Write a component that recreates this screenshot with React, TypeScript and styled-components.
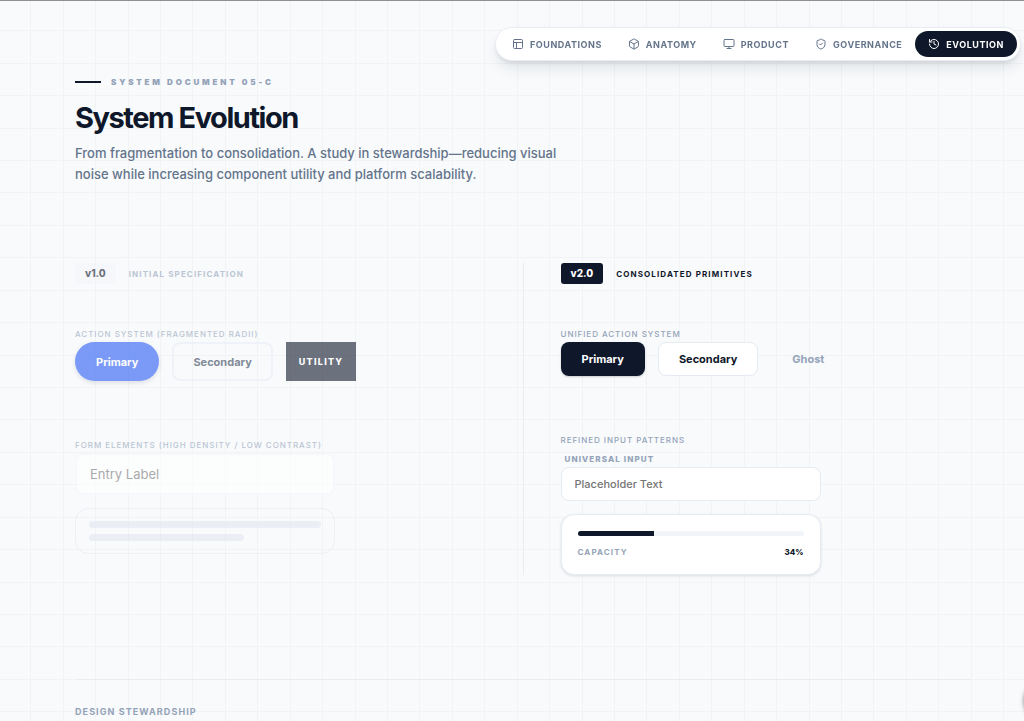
import React from "react";
import styled, { createGlobalStyle, css } from "styled-components";
import { Box, History, Monitor, PanelsTopLeft, ShieldCheck } from "lucide-react";

const ink = "#0f172a";
const slate = "#64748b";
const mist = "#94a3b8";

const GlobalStyle = createGlobalStyle`
  *, *::before, *::after { box-sizing: border-box; }
  body {
    margin: 0;
    background: #f8fafc;
    color: ${ink};
    font-family: Inter, "Liberation Sans", sans-serif;
    -webkit-font-smoothing: antialiased;
  }
  button, input { font-family: inherit; }
`;

const Page = styled.div`
  position: relative;
  min-height: 100vh;
  overflow: hidden;
  border-top: 1px solid #8e9095;
`;

const GridLines = styled.svg`
  position: absolute;
  inset: 0;
  z-index: -1;
  width: 100%;
  height: 100%;
`;

const Nav = styled.nav`
  position: fixed;
  top: 27px;
  right: 3px;
  z-index: 2;
  display: flex;
  align-items: center;
  padding: 3px;
  border: 1px solid #e9edf3;
  border-radius: 17px;
  background: #fff;
  box-shadow: 0 8px 16px -3px rgba(15, 23, 42, 0.12), 0 3px 5px -2px rgba(15, 23, 42, 0.12);
`;

const NavLink = styled.a<{ $active?: boolean }>`
  display: flex;
  align-items: center;
  gap: 6px;
  height: 26px;
  padding: 0 13px;
  border-radius: 13px;
  color: ${(p) => (p.$active ? "#fff" : slate)};
  background: ${(p) => (p.$active ? ink : "transparent")};
  font-size: 9px;
  font-weight: 700;
  letter-spacing: 0.06em;
  text-decoration: none;
  white-space: nowrap;
`;

const Main = styled.main`
  padding: 75px 54px 0 75px;
`;

const Eyebrow = styled.div`
  display: flex;
  align-items: center;
  gap: 10px;
  color: ${mist};
  font-size: 8px;
  font-weight: 900;
  line-height: 12px;
  letter-spacing: 0.35em;
`;

const Dash = styled.span`
  width: 26px;
  height: 2px;
  background: ${ink};
`;

const Title = styled.h1`
  margin: 12px 0 7px;
  font-size: 29px;
  font-weight: 700;
  line-height: 36px;
  letter-spacing: -0.05em;
`;

const Lead = styled.p`
  max-width: 484px;
  margin: 0;
  color: ${slate};
  font-size: 13px;
  font-weight: 500;
  line-height: 21px;
`;

const Comparison = styled.div`
  display: grid;
  grid-template-columns: 1fr 1fr;
  margin-top: 78px;
`;

const Version = styled.section<{ $current?: boolean }>`
  ${(p) =>
    p.$current
      ? css`
          padding-left: 37px;
          border-left: 1px solid #e9edf2;
        `
      : css`
          opacity: 0.6;
        `}
`;

const VersionHead = styled.header`
  display: flex;
  align-items: center;
  gap: 13px;
  margin-bottom: 44px;
`;

const Badge = styled.span<{ $current?: boolean }>`
  padding: 0 10px;
  border-radius: 3px;
  color: ${(p) => (p.$current ? "#fff" : ink)};
  background: ${(p) => (p.$current ? ink : "#f4f6fa")};
  font-size: 10px;
  font-weight: 800;
  line-height: 21px;
`;

const VersionName = styled.h2<{ $current?: boolean }>`
  margin: 0;
  color: ${(p) => (p.$current ? ink : mist)};
  font-size: 8px;
  font-weight: 700;
  line-height: 12px;
  letter-spacing: 0.14em;
`;

const Group = styled.div`
  & + & { margin-top: 58px; }
`;

const GroupLabel = styled.h3`
  margin: 0 0 2px;
  color: ${mist};
  font-size: 8px;
  font-weight: 500;
  line-height: 12px;
  letter-spacing: 0.12em;
`;

const Actions = styled.div`
  display: flex;
  gap: 13px;
`;

const Button = styled.button`
  height: 34px;
  padding: 0 20px;
  border: 1px solid transparent;
  border-radius: 8px;
  color: ${mist};
  background: transparent;
  font-size: 11px;
  font-weight: 700;
`;

const DarkButton = styled(Button)`
  color: #fff;
  background: ${ink};
  box-shadow: 0 1px 2px rgba(15, 23, 42, 0.2);
`;

const LightButton = styled(Button)`
  border-color: #e6ebf2;
  color: ${ink};
  background: #fff;
`;

const PillButton = styled(Button)`
  height: 39px;
  border-radius: 20px;
  color: #fff;
  background: #295cf5;
  box-shadow: 0 2px 4px rgba(15, 23, 42, 0.18);
`;

const OutlineButton = styled(Button)`
  height: 39px;
  padding: 0 19px;
  border: 2px solid #eaedf6;
  color: #334155;
`;

const SquareButton = styled(Button)`
  height: 39px;
  padding: 0 12px;
  border-radius: 0;
  color: #fff;
  background: ${ink};
  font-size: 9px;
  font-weight: 800;
  letter-spacing: 0.14em;
`;

const Fields = styled.div`
  display: flex;
  flex-direction: column;
  gap: 13px;
  max-width: 260px;
`;

const FieldLabel = styled.label`
  display: block;
  padding: 5px 4px 2px;
  color: ${mist};
  font-size: 8px;
  font-weight: 800;
  line-height: 12px;
  letter-spacing: 0.14em;
`;

const TextInput = styled.input`
  display: block;
  width: 100%;
  height: 34px;
  padding: 0 13px;
  border: 1px solid #e6ebf2;
  border-radius: 8px;
  background: #fff;
  font-size: 11px;
  font-weight: 500;
  &::placeholder { color: #757575; opacity: 1; }
`;

const LegacyInput = styled(TextInput)`
  height: 42px;
  border: 2px solid #f6f8fc;
  font-size: 13px;
  font-weight: 400;
`;

const SkeletonCard = styled.div`
  display: flex;
  flex-direction: column;
  gap: 6px;
  padding: 12px 13px;
  border: 1px solid #e6eaf0;
  border-radius: 13px;
`;

const SkeletonLine = styled.span<{ $short?: boolean }>`
  width: ${(p) => (p.$short ? "67%" : "100%")};
  height: 7px;
  border-radius: 4px;
  background: #e4e7f1;
`;

const CapacityCard = styled.div`
  display: flex;
  flex-direction: column;
  gap: 10px;
  padding: 16px;
  border: 1px solid #e6ebf2;
  border-radius: 13px;
  background: #fff;
  box-shadow: 0 1px 3px rgba(15, 23, 42, 0.12);
`;

const Track = styled.div`
  height: 5px;
  overflow: hidden;
  border-radius: 3px;
  background: #f1f4f9;
`;

const Fill = styled.div`
  height: 100%;
  background: ${ink};
`;

const CapacityRow = styled.div`
  display: flex;
  justify-content: space-between;
  color: ${mist};
  font-size: 8px;
  font-weight: 700;
  line-height: 12px;
`;

const CapacityName = styled.span`
  letter-spacing: 0.14em;
`;

const CapacityValue = styled.span`
  color: ${ink};
  font-weight: 800;
`;

const Footer = styled.footer`
  margin-top: 104px;
  padding: 26px 0 3px;
  border-top: 1px solid #e9ecf0;
`;

const FooterTitle = styled.h2`
  margin: 0;
  color: ${mist};
  font-size: 9px;
  font-weight: 700;
  line-height: 12px;
  letter-spacing: 0.12em;
`;

const FloatingDot = styled.div`
  position: fixed;
  right: -41px;
  bottom: 0;
  width: 40px;
  height: 40px;
  border-radius: 50%;
  background: ${ink};
  box-shadow: 0 0 5px rgba(0, 0, 0, 0.8);
`;

const links = [
  { label: "FOUNDATIONS", Icon: PanelsTopLeft },
  { label: "ANATOMY", Icon: Box },
  { label: "PRODUCT", Icon: Monitor },
  { label: "GOVERNANCE", Icon: ShieldCheck },
  { label: "EVOLUTION", Icon: History, active: true },
];

const gridStops = [30, 63, 95, 128, 160, 192, 225];
const capacity = 34;

export default function App() {
  return (
    <>
      <GlobalStyle />
      <Page>
        <GridLines aria-hidden="true">
          <defs>
            <pattern id="grid" width="227" height="227" patternUnits="userSpaceOnUse">
              {gridStops.map((s) => (
                <path key={s} d={`M${s + 0.5} 0V227M0 ${s - 0.5}H227`} stroke="#f1f3f5" strokeWidth="1" />
              ))}
            </pattern>
          </defs>
          <rect width="100%" height="100%" fill="url(#grid)" />
        </GridLines>

        <Nav aria-label="Sections">
          {links.map(({ label, Icon, active }) => (
            <NavLink key={label} href={`#${label.toLowerCase()}`} $active={active} aria-current={active ? "page" : undefined}>
              <Icon size={12} strokeWidth={2} aria-hidden="true" />
              {label}
            </NavLink>
          ))}
        </Nav>

        <Main>
          <Eyebrow>
            <Dash />
            SYSTEM DOCUMENT 05-C
          </Eyebrow>
          <Title>System Evolution</Title>
          <Lead>
            From fragmentation to consolidation. A study in stewardship—reducing visual noise while increasing
            component utility and platform scalability.
          </Lead>

          <Comparison>
            <Version>
              <VersionHead>
                <Badge>v1.0</Badge>
                <VersionName>INITIAL SPECIFICATION</VersionName>
              </VersionHead>
              <Group>
                <GroupLabel>ACTION SYSTEM (FRAGMENTED RADII)</GroupLabel>
                <Actions>
                  <PillButton type="button">Primary</PillButton>
                  <OutlineButton type="button">Secondary</OutlineButton>
                  <SquareButton type="button">UTILITY</SquareButton>
                </Actions>
              </Group>
              <Group>
                <GroupLabel id="legacy-form">FORM ELEMENTS (HIGH DENSITY / LOW CONTRAST)</GroupLabel>
                <Fields>
                  <LegacyInput type="text" placeholder="Entry Label" aria-labelledby="legacy-form" />
                  <SkeletonCard>
                    <SkeletonLine />
                    <SkeletonLine $short />
                  </SkeletonCard>
                </Fields>
              </Group>
            </Version>

            <Version $current>
              <VersionHead>
                <Badge $current>v2.0</Badge>
                <VersionName $current>CONSOLIDATED PRIMITIVES</VersionName>
              </VersionHead>
              <Group>
                <GroupLabel>UNIFIED ACTION SYSTEM</GroupLabel>
                <Actions>
                  <DarkButton type="button">Primary</DarkButton>
                  <LightButton type="button">Secondary</LightButton>
                  <Button type="button">Ghost</Button>
                </Actions>
              </Group>
              <Group>
                <GroupLabel>REFINED INPUT PATTERNS</GroupLabel>
                <Fields>
                  <div>
                    <FieldLabel htmlFor="universal-input">UNIVERSAL INPUT</FieldLabel>
                    <TextInput id="universal-input" type="text" placeholder="Placeholder Text" />
                  </div>
                  <CapacityCard>
                    <Track role="progressbar" aria-label="Capacity" aria-valuenow={capacity}>
                      <Fill style={{ width: `${capacity}%` }} />
                    </Track>
                    <CapacityRow>
                      <CapacityName>CAPACITY</CapacityName>
                      <CapacityValue>{capacity}%</CapacityValue>
                    </CapacityRow>
                  </CapacityCard>
                </Fields>
              </Group>
            </Version>
          </Comparison>

          <Footer>
            <FooterTitle>DESIGN STEWARDSHIP</FooterTitle>
          </Footer>
        </Main>
        <FloatingDot />
      </Page>
    </>
  );
}
